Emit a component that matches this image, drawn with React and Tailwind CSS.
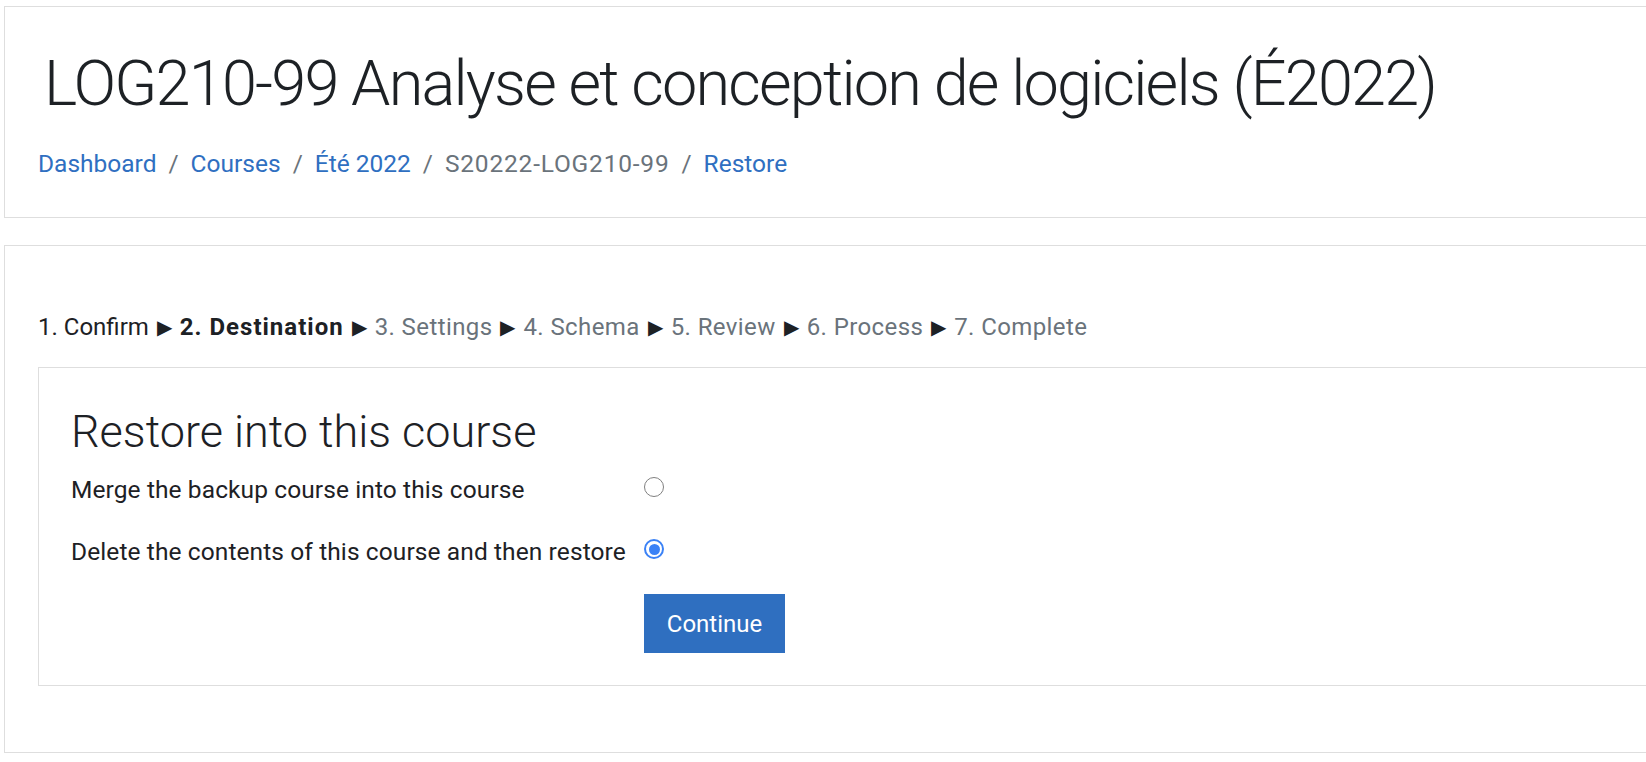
import React from "react";

const crumbs = [
  { label: "Dashboard", link: true },
  { label: "Courses", link: true },
  { label: "Été 2022", link: true },
  { label: "S20222-LOG210-99", link: false },
  { label: "Restore", link: true },
];

const steps = [
  { label: "1. Confirm", state: "done" },
  { label: "2. Destination", state: "current" },
  { label: "3. Settings", state: "todo" },
  { label: "4. Schema", state: "todo" },
  { label: "5. Review", state: "todo" },
  { label: "6. Process", state: "todo" },
  { label: "7. Complete", state: "todo" },
];

function Radio({ checked }) {
  return checked ? (
    <span className="mb-[6px] flex h-[20px] w-[20px] items-center justify-center rounded-full border-[2px] border-[#3b82f6] bg-white">
      <span className="h-[11px] w-[11px] rounded-full bg-[#3b82f6]" />
    </span>
  ) : (
    <span className="mb-[6px] block h-[20px] w-[20px] rounded-full border-[1.5px] border-[#808080] bg-white" />
  );
}

export default function App() {
  return (
    <div
      className="min-h-screen overflow-hidden bg-white text-[#1d2125]"
      style={{ fontFamily: "Roboto, 'Liberation Sans', sans-serif" }}
    >
      {/* HEADER */}
      <header className="ml-[4px] mt-[6px] h-[212px] w-[1700px] border border-[#dedede] pl-[33px] pt-[37px]">
        <h1 className="ml-[6px] text-[63px] font-light leading-[80px] tracking-[-1.8px]">
          LOG210-99 Analyse et conception de logiciels (É2022)
        </h1>
        <nav className="mt-[25px] flex items-center text-[24.5px] leading-[30px]">
          {crumbs.map((c, i) => (
            <span key={c.label} className="flex items-center">
              {i > 0 && <span className="px-[12px] text-[#6a737b]">/</span>}
              <span
                className={
                  c.link ? "text-[#2f6fc1]" : "tracking-[0.8px] text-[#6a737b]"
                }
              >
                {c.label}
              </span>
            </span>
          ))}
        </nav>
      </header>

      {/* MAIN */}
      <main className="ml-[4px] mt-[27px] h-[508px] w-[1700px] border border-[#dedede] pl-[33px] pt-[66px]">
        <div className="flex items-center text-[24px] leading-[30px]">
          {steps.map((s, i) => (
            <span key={s.label} className="flex items-center">
              {i > 0 && (
                <span className="mx-[8px] text-[20px] text-[#1d2125]">▶</span>
              )}
              <span
                className={
                  s.state === "current"
                    ? "font-bold tracking-[1px] text-[#1d2125]"
                    : s.state === "done"
                    ? "text-[#1d2125]"
                    : "tracking-[0.4px] text-[#6a737b]"
                }
              >
                {s.label}
              </span>
            </span>
          ))}
        </div>

        <section className="mt-[25px] h-[319px] border border-[#dedede] pl-[32px] pt-[38px]">
          <h2 className="text-[45px] font-light leading-[52px]">Restore into this course</h2>

          <div className="mt-[14px] grid grid-cols-[573px_1fr] items-center gap-y-[26px] text-[24.5px] leading-[36px] tracking-[0.1px]">
            <span>Merge the backup course into this course</span>
            <Radio checked={false} />
            <span>Delete the contents of this course and then restore</span>
            <Radio checked />
            <span />
            <button className="mt-[-2px] h-[59px] w-[141px] bg-[#2f6fc0] text-[24px] tracking-normal text-white">
              Continue
            </button>
          </div>
        </section>
      </main>
    </div>
  );
}
